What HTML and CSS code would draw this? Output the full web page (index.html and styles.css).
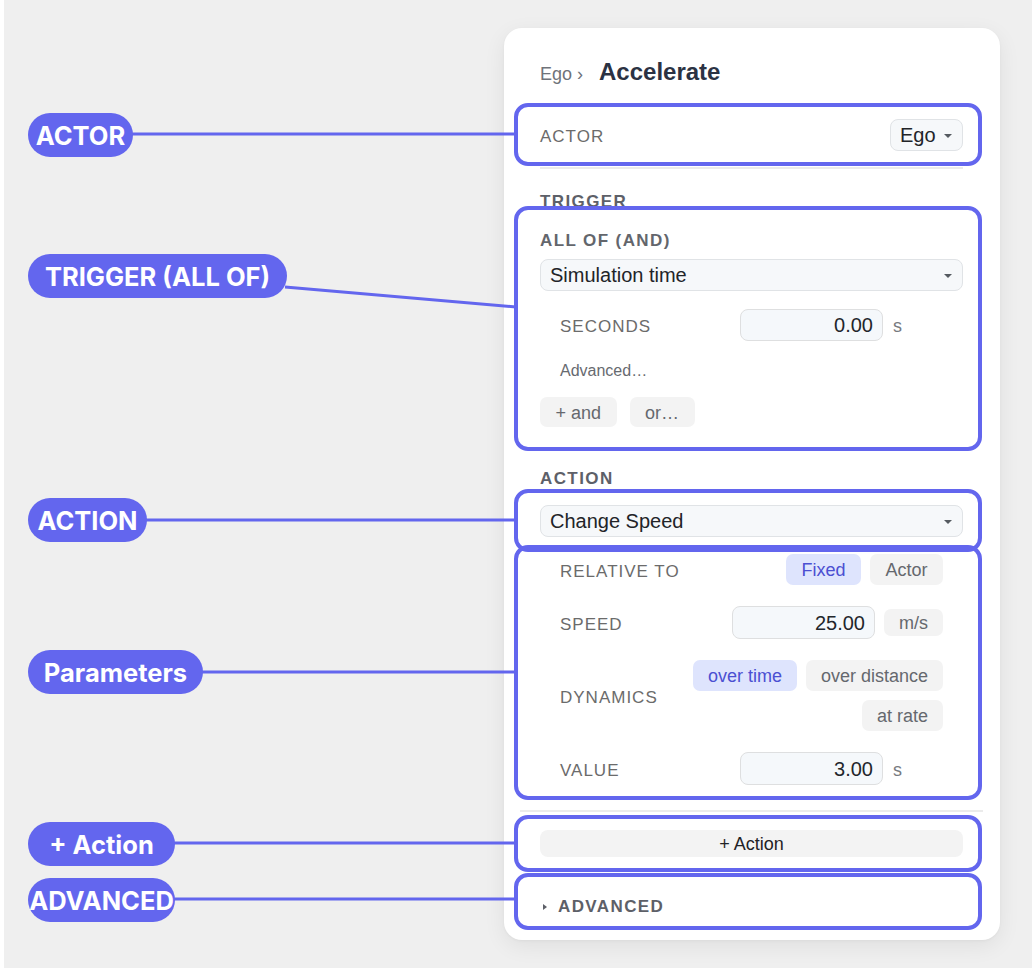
FILE: index.html
```html
<!DOCTYPE html>
<html>
<head>
<meta charset="utf-8">
<title>Accelerate</title>
<link rel="stylesheet" href="styles.css">
</head>
<body>
<div class="page">
  <div class="stage">
    <div class="card">
      <div class="crumb"><span class="crumb-parent">Ego ›</span><span class="crumb-title">Accelerate</span></div>
      <div class="divider"></div>
      <div class="actor-row">
        <span class="label">ACTOR</span>
        <div class="select select-small"><span>Ego</span><span class="caret"></span></div>
      </div>
      <div class="divider"></div>
      <div class="section-title trigger-title">TRIGGER</div>
      <div class="group-title">ALL OF (AND)</div>
      <div class="select select-wide"><span>Simulation time</span><span class="caret"></span></div>
      <div class="param-row seconds-row">
        <span class="label">SECONDS</span>
        <div class="num-input">0.00</div>
        <span class="unit">s</span>
      </div>
      <div class="advanced-link">Advanced…</div>
      <div class="btn-row"><span class="chip">+ and</span><span class="chip">or…</span></div>
      <div class="section-title action-title">ACTION</div>
      <div class="select select-wide action-select"><span>Change Speed</span><span class="caret"></span></div>
      <div class="params">
        <div class="param-row relative-row">
          <span class="label">RELATIVE TO</span>
          <div class="toggles">
            <span class="chip chip-on">Fixed</span>
            <span class="chip">Actor</span>
          </div>
        </div>
        <div class="param-row speed-row">
          <span class="label">SPEED</span>
          <div class="num-input num-speed">25.00</div>
          <span class="chip chip-unit">m/s</span>
        </div>
        <div class="param-row dyn-row">
          <span class="label">DYNAMICS</span>
          <div class="dyn-options">
            <span class="chip chip-on">over time</span>
            <span class="chip">over distance</span>
            <span class="chip">at rate</span>
          </div>
        </div>
        <div class="param-row value-row">
          <span class="label">VALUE</span>
          <div class="num-input">3.00</div>
          <span class="unit">s</span>
        </div>
      </div>
      <div class="divider divider-wide"></div>
      <div class="add-action">+ Action</div>
      <div class="advanced"><span class="tri"></span>ADVANCED</div>
    </div>
  </div>

  <svg class="leaders" width="1036" height="968" viewBox="0 0 1036 968">
    <g stroke="#6366ee" stroke-width="3" fill="none">
      <line x1="130" y1="134" x2="516" y2="134"/>
      <line x1="285" y1="287" x2="516" y2="307"/>
      <line x1="144" y1="520" x2="516" y2="520"/>
      <line x1="200" y1="672" x2="516" y2="672"/>
      <line x1="172" y1="843" x2="516" y2="843"/>
      <line x1="172" y1="899" x2="516" y2="899"/>
    </g>
  </svg>

  <div class="hl hl-actor"></div>
  <div class="hl hl-trigger"></div>
  <div class="hl hl-action"></div>
  <div class="hl hl-params"></div>
  <div class="hl hl-add"></div>
  <div class="hl hl-adv"></div>

  <div class="pill pill-actor">ACTOR</div>
  <div class="pill pill-trigger">TRIGGER (ALL OF)</div>
  <div class="pill pill-action">ACTION</div>
  <div class="pill pill-params">Parameters</div>
  <div class="pill pill-add">+ Action</div>
  <div class="pill pill-adv">ADVANCED</div>
</div>
</body>
</html>
```
FILE: styles.css
```css
* { box-sizing: border-box; }

html, body {
  margin: 0;
  padding: 0;
  background: #ffffff;
}

.page {
  position: relative;
  width: 1036px;
  height: 968px;
  overflow: hidden;
  font-family: "Liberation Sans", Arial, sans-serif;
}

.stage {
  margin: 0 4px;
  width: 1028px;
  height: 968px;
  background: #efefef;
  padding: 28px 0 0 500px;
}

.card {
  width: 496px;
  height: 912px;
  background: #ffffff;
  border-radius: 18px;
  box-shadow: 0 6px 22px rgba(0, 0, 0, 0.07), 0 1px 3px rgba(0, 0, 0, 0.04);
  padding: 28px 37px 23px 36px;
  display: flex;
  flex-direction: column;
}

/* header */
.crumb {
  height: 32px;
  line-height: 32px;
  display: flex;
  align-items: baseline;
  white-space: nowrap;
}
.crumb-parent {
  font-size: 18px;
  color: #6f737a;
  margin-right: 16px;
}
.crumb-title {
  font-size: 24px;
  font-weight: 700;
  color: #2b3243;
}

.divider {
  height: 2px;
  background: #ebebeb;
  margin-top: 15px;
  flex: none;
}
.divider-wide {
  margin: 25px -20px 0 -20px;
}

.label {
  font-size: 17px;
  letter-spacing: 1px;
  color: #6b6b6b;
  white-space: nowrap;
  padding-top: 4px;
}

.actor-row {
  display: flex;
  align-items: center;
  justify-content: space-between;
  padding: 14px 0 16px 0;
  height: 62px;
}
.actor-row + .divider { margin-top: 0; }

.select {
  height: 32px;
  border: 1.5px solid #e0e3e6;
  background: #f6f8fa;
  border-radius: 8px;
  display: flex;
  align-items: center;
  justify-content: space-between;
  padding: 1px 10px 0 9px;
  font-size: 20px;
  color: #222428;
  white-space: nowrap;
}
.select-small { width: 73px; }
.select-wide { margin-top: 8px; }
.action-select { margin-top: 16px; }

.caret {
  width: 0;
  height: 0;
  border-left: 4px solid transparent;
  border-right: 4px solid transparent;
  border-top: 4px solid #555a60;
  margin-top: 1px;
}

.section-title {
  font-size: 17px;
  font-weight: 700;
  letter-spacing: 1.4px;
  color: #5d6068;
  line-height: 20px;
  height: 20px;
}
.trigger-title { margin-top: 23px; }
.action-title { margin-top: 42px; }

.group-title {
  margin-top: 19px;
  font-size: 17px;
  font-weight: 700;
  letter-spacing: 1.4px;
  color: #63666c;
  line-height: 20px;
  height: 20px;
  white-space: nowrap;
}

.param-row {
  display: flex;
  align-items: center;
  padding: 0 20px;
}
.param-row .label { flex: 1; }
.seconds-row { margin-top: 18px; height: 32px; }

.num-input {
  width: 143px;
  height: 32px;
  border: 1.5px solid #dedfe0;
  background: #f5f8fb;
  border-radius: 8px;
  font-size: 20px;
  color: #23262b;
  text-align: right;
  line-height: 27px;
  padding: 2px 9px 0 0;
  flex: none;
}
.num-speed, .value-row .num-input { height: 33px; line-height: 28px; }

.unit {
  width: 50px;
  margin-left: 10px;
  font-size: 18px;
  color: #777a80;
  flex: none;
  padding-top: 3px;
}

.advanced-link {
  margin-top: 20px;
  padding-left: 20px;
  font-size: 16px;
  color: #676a70;
  line-height: 20px;
  height: 20px;
}

.btn-row {
  margin-top: 16px;
  display: flex;
  gap: 13px;
  height: 30px;
}

.chip {
  display: inline-flex;
  align-items: center;
  justify-content: center;
  height: 30px;
  padding: 2px 15.5px 0 15.5px;
  background: #f3f3f3;
  border-radius: 7px;
  font-size: 18px;
  color: #65686e;
  white-space: nowrap;
  flex: none;
}
.chip-on {
  background: #dee4fd;
  color: #4b4fd2;
}

.params { display: flex; flex-direction: column; }

.relative-row { margin-top: 17px; height: 31px; }
.toggles { display: flex; gap: 9px; }
.toggles .chip { height: 31px; }

.speed-row { margin-top: 21px; height: 33px; }
.chip-unit {
  height: 27px;
  width: 59px;
  padding: 2px 0 0 0;
  margin-left: 9px;
}

.dyn-row { margin-top: 21px; }
.dyn-row .label { flex: none; }
.dyn-options {
  flex: 1;
  margin-left: 10px;
  display: flex;
  flex-wrap: wrap;
  justify-content: flex-end;
  gap: 9px;
}
.dyn-options .chip { height: 31px; padding: 2px 15px 0 15px; }

.value-row { margin-top: 21px; height: 33px; }

.add-action {
  margin-top: 18px;
  height: 27px;
  background: #f3f3f3;
  border-radius: 8px;
  display: flex;
  align-items: center;
  justify-content: center;
  padding-top: 2px;
  font-size: 18px;
  color: #1f2226;
}

.advanced {
  margin-top: 40px;
  height: 20px;
  line-height: 20px;
  display: flex;
  align-items: center;
  font-size: 17px;
  font-weight: 700;
  letter-spacing: 1.4px;
  color: #5d6068;
}
.tri {
  width: 0;
  height: 0;
  border-top: 3.5px solid transparent;
  border-bottom: 3.5px solid transparent;
  border-left: 4px solid #5d6068;
  margin: 0 11px 0 3px;
}

/* annotation overlay */
.leaders {
  position: absolute;
  left: 0;
  top: 0;
  pointer-events: none;
}

.hl {
  position: absolute;
  left: 514px;
  width: 468px;
  border: 4px solid #6366ee;
  border-radius: 14px;
}
.hl-actor { top: 103px; height: 63px; }
.hl-trigger { top: 206px; height: 245px; }
.hl-action { top: 489px; height: 63px; }
.hl-params { top: 545px; height: 255px; }
.hl-add { top: 815px; height: 57px; }
.hl-adv { top: 873px; height: 57px; }

.pill {
  position: absolute;
  left: 28px;
  height: 44px;
  border-radius: 22px;
  background: #6366ee;
  color: #ffffff;
  font-family: Inter, "Liberation Sans", sans-serif;
  font-weight: 700;
  font-size: 25.5px;
  display: flex;
  align-items: center;
  justify-content: center;
  white-space: nowrap;
}
.pill-actor { top: 113px; width: 105px; }
.pill-trigger { top: 254px; width: 259px; }
.pill-action { top: 498px; width: 119px; }
.pill-params { top: 650px; width: 175px; }
.pill-add { top: 822px; width: 147px; }
.pill-adv { top: 878px; width: 147px; }
```
